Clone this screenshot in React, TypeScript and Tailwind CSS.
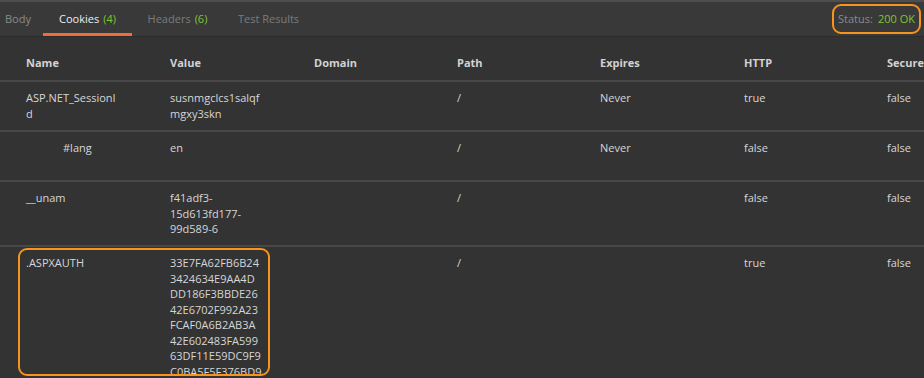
import React from "react";

interface Cookie {
  name: string[];
  value: string[];
  domain: string;
  path: string;
  expires: string;
  http: string;
  secure: string;
  indent?: boolean;
  height: string;
}

const cookies: Cookie[] = [
  {
    name: ["ASP.NET_SessionI", "d"],
    value: ["susnmgclcs1salqf", "mgxy3skn"],
    domain: "",
    path: "/",
    expires: "Never",
    http: "true",
    secure: "false",
    height: "h-[50px]",
  },
  {
    name: ["#lang"],
    value: ["en"],
    domain: "",
    path: "/",
    expires: "Never",
    http: "false",
    secure: "false",
    indent: true,
    height: "h-[50px]",
  },
  {
    name: ["__unam"],
    value: ["f41adf3-", "15d613fd177-", "99d589-6"],
    domain: "",
    path: "/",
    expires: "",
    http: "false",
    secure: "false",
    height: "h-[65px]",
  },
  {
    name: [".ASPXAUTH"],
    value: [
      "33E7FA62FB6B24",
      "3424634E9AA4D",
      "DD186F3BBDE26",
      "42E6702F992A23",
      "FCAF0A6B2AB3A",
      "42E602483FA599",
      "63DF11E59DC9F9",
      "C0BA5F5F376BD9",
    ],
    domain: "",
    path: "/",
    expires: "",
    http: "true",
    secure: "false",
    height: "h-[140px]",
  },
];

const cols = "grid grid-cols-[144px_144px_143px_143px_144px_143px_143px] pl-[26px] w-[1030px]";

export default function App() {
  return (
    <div
      className="w-[924px] h-[378px] overflow-hidden bg-[#333333] text-[11px] text-[#d6d6d6]"
      style={{ fontFamily: '"Open Sans", "Noto Sans", sans-serif' }}
    >
      <div className="h-[2px] bg-[#4e4e4e]" />
      {/* tabs */}
      <div className="h-[35px] bg-[#393939] border-b border-[#2c2c2c] flex items-stretch">
        <div className="w-[43px] flex items-center pl-[5px] text-[#8a8a8a]">Body</div>
        <div className="w-[89px] flex items-center justify-center border-b-[3px] border-[#f26b3a] pt-[3px] text-[#eeeeee]">
          Cookies <span className="ml-[4px] text-[#7ec636]">(4)</span>
        </div>
        <div className="w-[91px] flex items-center justify-center text-[#7c7c7c]">
          Headers <span className="ml-[4px] text-[#7ec636]">(6)</span>
        </div>
        <div className="w-[91px] flex items-center justify-center text-[#7c7c7c]">Test Results</div>
        <div className="ml-auto mr-[3px] mt-[2px] h-[30px] w-[89px] rounded-[9px] border-2 border-[#f7941d] flex items-center justify-center">
          <span className="text-[#8a8a8a]">Status:</span>
          <span className="ml-[5px] text-[#7ec636]">200 OK</span>
        </div>
      </div>

      {/* header */}
      <div className={`${cols} h-[45px] pt-[18px] leading-[16px] border-b-2 border-[#484848] font-bold text-[#d2d2d2]`}>
        <div>Name</div>
        <div>Value</div>
        <div>Domain</div>
        <div>Path</div>
        <div>Expires</div>
        <div>HTTP</div>
        <div>Secure</div>
      </div>

      {cookies.map((c, i) => (
        <div
          key={c.name[0]}
          className={`relative ${cols} ${c.height} pt-[8px] leading-[15.5px] ${
            i < cookies.length - 1 ? "border-b-2 border-[#484848]" : ""
          }`}
        >
          <div className={c.indent ? "pl-[37px]" : ""}>
            {c.name.map((n) => (
              <div key={n}>{n}</div>
            ))}
          </div>
          <div>
            {c.value.map((v) => (
              <div key={v}>{v}</div>
            ))}
          </div>
          <div>{c.domain}</div>
          <div>{c.path}</div>
          <div>{c.expires}</div>
          <div>{c.http}</div>
          <div>{c.secure}</div>
          {c.name[0] === ".ASPXAUTH" && (
            <div className="absolute left-[18px] top-[1px] w-[252px] h-[128px] rounded-[9px] border-2 border-[#f7941d]" />
          )}
        </div>
      ))}
    </div>
  );
}
